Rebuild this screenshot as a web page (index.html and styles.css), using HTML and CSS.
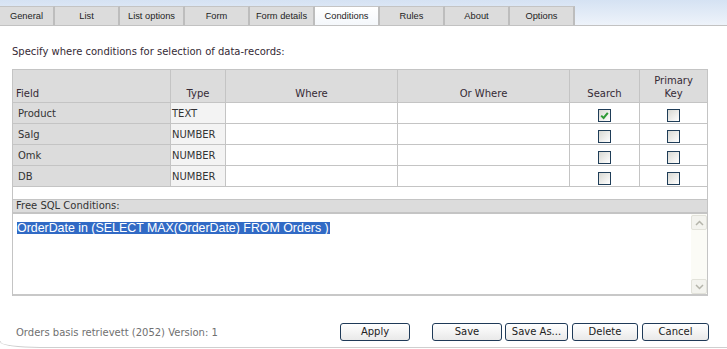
FILE: index.html
```html
<!DOCTYPE html>
<html>
<head>
<meta charset="utf-8">
<link rel="stylesheet" href="styles.css">
</head>
<body>
<div class="tabbar">
  <div class="tabs">
    <div class="tab tab-first">General</div>
    <div class="tab">List</div>
    <div class="tab">List options</div>
    <div class="tab">Form</div>
    <div class="tab">Form details</div>
    <div class="tab tab-active">Conditions</div>
    <div class="tab">Rules</div>
    <div class="tab">About</div>
    <div class="tab">Options</div>
  </div>
</div>
<div class="content">
  <div class="intro">Specify where conditions for selection of data-records:</div>
  <div class="grid">
    <div class="hd hd-left">Field</div>
    <div class="hd">Type</div>
    <div class="hd">Where</div>
    <div class="hd">Or Where</div>
    <div class="hd">Search</div>
    <div class="hd">Primary<br>Key</div>

    <div class="c field">Product</div>
    <div class="c type">TEXT</div>
    <div class="c"></div>
    <div class="c"></div>
    <div class="c chk"><span class="box"><svg viewBox="0 0 11 11" width="11" height="11"><path d="M2.2 5.6 L4.6 8 L8.8 2.8" fill="none" stroke="#2f9a35" stroke-width="2"/></svg></span></div>
    <div class="c chk"><span class="box"></span></div>

    <div class="c field">Salg</div>
    <div class="c type">NUMBER</div>
    <div class="c"></div>
    <div class="c"></div>
    <div class="c chk"><span class="box"></span></div>
    <div class="c chk"><span class="box"></span></div>

    <div class="c field">Omk</div>
    <div class="c type">NUMBER</div>
    <div class="c"></div>
    <div class="c"></div>
    <div class="c chk"><span class="box"></span></div>
    <div class="c chk"><span class="box"></span></div>

    <div class="c field">DB</div>
    <div class="c type">NUMBER</div>
    <div class="c"></div>
    <div class="c"></div>
    <div class="c chk"><span class="box"></span></div>
    <div class="c chk"><span class="box"></span></div>

    <div class="spacer"></div>
    <div class="free-hd">Free SQL Conditions:</div>
    <div class="free-area">
      <div class="free-text"><span class="sel">OrderDate in (SELECT MAX(OrderDate) FROM Orders )</span></div>
      <div class="scroll">
        <div class="sbtn"><svg viewBox="0 0 9 6" width="9" height="6"><path d="M1 5 L4.5 1.5 L8 5" fill="none" stroke="#b4b4aa" stroke-width="1.5"/></svg></div>
        <div class="strack"></div>
        <div class="sbtn"><svg viewBox="0 0 9 6" width="9" height="6"><path d="M1 1 L4.5 4.5 L8 1" fill="none" stroke="#b4b4aa" stroke-width="1.5"/></svg></div>
      </div>
    </div>
  </div>
  <div class="footer">
    <div class="info">Orders basis retrievett (2052) Version: 1</div>
    <div class="btn b-apply">Apply</div>
    <div class="btn b-save">Save</div>
    <div class="btn b-saveas">Save As...</div>
    <div class="btn b-delete">Delete</div>
    <div class="btn b-cancel">Cancel</div>
  </div>
</div>
<div class="frame-bottom"></div>
</body>
</html>
```
FILE: styles.css
```css
html, body {
  margin: 0;
  padding: 0;
}
body {
  width: 727px;
  height: 349px;
  overflow: hidden;
  background: #fff;
  font-family: "DejaVu Sans", Verdana, sans-serif;
  font-size: 10px;
  color: #333;
}
.tabbar {
  height: 26px;
  box-sizing: border-box;
  background: linear-gradient(#d5e2f3, #eef3fa);
  border-bottom: 1px solid #c2c2c2;
  display: flex;
  align-items: flex-end;
}
.tabs {
  display: flex;
  height: 19px;
}
.tab {
  width: 65px;
  box-sizing: border-box;
  background: #dcdcdc;
  border-top: 1px solid #c4c4c4;
  border-right: 2px solid #bdbdbd;
  font-family: "Liberation Sans", Arial, sans-serif;
  font-size: 9.3px;
  color: #1e1e1e;
  text-align: center;
  line-height: 18px;
}
.tab-first {
  width: 55px;
}
.tab-active {
  background: linear-gradient(#ffffff, #f4f7fb);
}
.content {
  padding: 0 18px 0 12px;
}
.intro {
  margin-top: 20px;
  height: 12px;
  line-height: 12px;
  color: #352a35;
}
.grid {
  margin-top: 11px;
  width: 696px;
  box-sizing: border-box;
  display: grid;
  grid-template-columns: 158px 55px 172px 172px 70px 68px;
  grid-template-rows: 33px 21px 21px 21px 21px 13px 14px 82px;
  border-top: 1px solid #c4c4c4;
  border-left: 1px solid #c4c4c4;
}
.hd, .c, .spacer, .free-hd, .free-area {
  box-sizing: border-box;
  border-right: 1px solid #c4c4c4;
  border-bottom: 1px solid #c4c4c4;
}
.hd {
  background: #dcdcdc;
  display: flex;
  align-items: flex-end;
  justify-content: center;
  text-align: center;
  line-height: 13px;
  padding-bottom: 2px;
  color: #352a35;
}
.hd-left {
  justify-content: flex-start;
  padding-left: 3px;
}
.c {
  background: #fff;
  line-height: 19px;
  padding-top: 1px;
}
.field {
  background: #dcdcdc;
  padding-left: 5px;
}
.type {
  background: #f3f3f3;
  padding-left: 1px;
}
.chk {
  display: flex;
  justify-content: center;
  align-items: flex-start;
  padding-top: 6px;
}
.box {
  width: 13px;
  height: 13px;
  box-sizing: border-box;
  border: 1px solid #1f3d58;
  background: linear-gradient(135deg, #d8d8d2, #ffffff);
  display: flex;
  align-items: center;
  justify-content: center;
}
.spacer {
  grid-column: 1 / -1;
  background: #fff;
}
.free-hd {
  grid-column: 1 / -1;
  background: #dcdcdc;
  border-bottom: 2px solid #c4c4c4;
  padding-left: 3px;
  line-height: 12px;
}
.free-area {
  grid-column: 1 / -1;
  border-bottom: 2px solid #c8c8c8;
  display: flex;
  background: #fff;
}
.free-text {
  flex: 1;
  padding: 7px 0 0 4px;
  font-family: "Liberation Sans", Arial, sans-serif;
  font-size: 12.4px;
}
.sel {
  display: inline-block;
  line-height: 12px;
  height: 12px;
  background: #316ac5;
  color: #fff;
  padding-right: 1px;
}
.scroll {
  width: 16px;
  display: flex;
  flex-direction: column;
  background: #fbfbf6;
  padding: 1px 0 0;
}
.sbtn {
  height: 15px;
  box-sizing: border-box;
  border: 1px solid #e2e2da;
  background: #f3f3ee;
  display: flex;
  align-items: center;
  justify-content: center;
  border-radius: 2px;
}
.strack {
  flex: 1;
}
.footer {
  margin-top: 27px;
  height: 18px;
  display: flex;
  align-items: center;
}
.info {
  width: 328px;
  padding-left: 4px;
  box-sizing: border-box;
  color: #707070;
}
.btn {
  height: 18px;
  box-sizing: border-box;
  border: 1px solid #1f3a58;
  border-radius: 3px;
  background: linear-gradient(#ffffff, #e9e9e9);
  color: #222;
  text-align: center;
  line-height: 16px;
}
.b-apply { width: 70px; }
.b-save { width: 70px; margin-left: 22px; }
.b-saveas { width: 63px; margin-left: 3px; }
.b-delete { width: 66px; margin-left: 4px; }
.b-cancel { width: 67px; margin-left: 4px; }
.frame-bottom {
  margin-top: 0;
  height: 6px;
  border-bottom: 1px solid #cfcfcf;
  border-left: 1px solid #dcdcdc;
  border-bottom-left-radius: 40px 6px;
}
```
